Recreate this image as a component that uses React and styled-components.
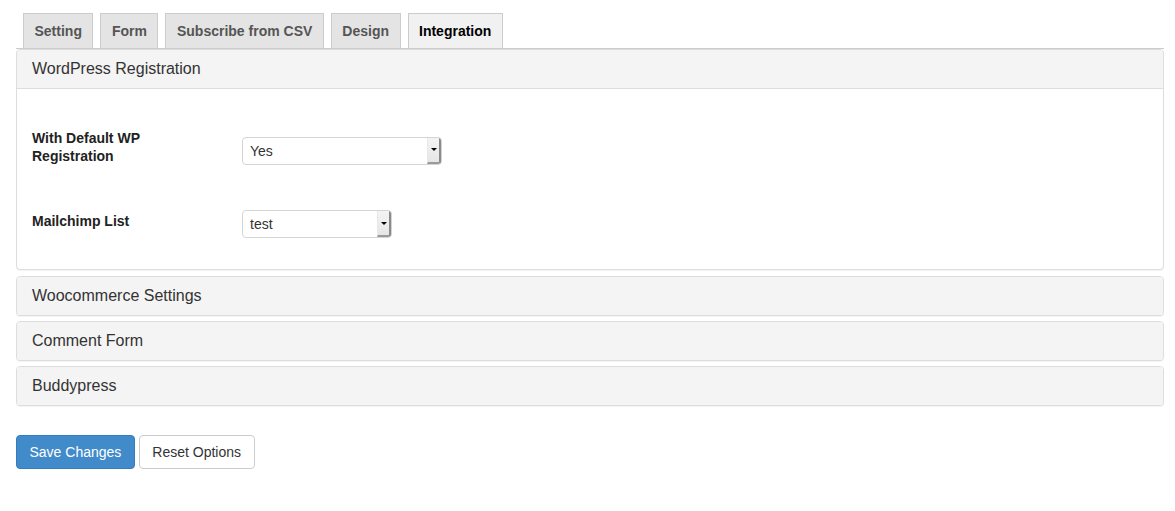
import React from "react";
import styled, { createGlobalStyle } from "styled-components";

const GlobalStyle = createGlobalStyle`
    body {
        margin: 0;
        background: #fff;
        font-family: "Liberation Sans", Arial, sans-serif;
        color: #333;
    }
`;

const Page = styled.div`
    width: 1148px;
    padding: 13px 0 0 16px;
`;

const TabBar = styled.div`
    display: flex;
    border-bottom: 1px solid #ccc;
`;

const Tab = styled.div`
    margin-left: 7px;
    padding: 5px 10.5px;
    border: 1px solid #ccc;
    border-bottom: none;
    background: ${p => (p.active ? "#f1f1f1" : "#e4e4e4")};
    color: ${p => (p.active ? "#000" : "#555")};
    font-size: 14px;
    font-weight: bold;
    line-height: 24px;
`;

const Panel = styled.div`
    border: 1px solid #ddd;
    border-radius: 4px;
    background: #fff;
    box-shadow: 0 1px 1px rgba(0, 0, 0, 0.05);
    margin-top: ${p => (p.first ? "0" : "5px")};
    overflow: hidden;
`;

const PanelHeading = styled.div`
    background: #f4f4f4;
    padding: 10px 15px;
    font-size: 16px;
    line-height: 18px;
    color: #333;
    border-bottom: ${p => (p.open ? "1px solid #ddd" : "none")};
`;

const PanelBody = styled.div`
    padding: 15px;
`;

const Row = styled.div`
    display: grid;
    grid-template-columns: 210px 1fr;
    align-items: center;
    padding: 19px 0;

    &:first-child {
        padding-top: 25px;
    }

    &:last-child {
        padding-bottom: 16px;
    }
`;

const Label = styled.div`
    font-size: 14px;
    font-weight: bold;
    line-height: 18px;
    color: #222;
    width: 150px;
`;

const Select = styled.div`
    display: flex;
    align-items: stretch;
    box-sizing: border-box;
    width: ${p => p.width}px;
    height: 28px;
    margin-top: 7px;
    border: 1px solid #d4d4d4;
    border-radius: 4px;
    background: #fff;
    font-size: 14px;
    color: #333;
    overflow: hidden;
`;

const SelectValue = styled.span`
    flex: 1;
    padding-left: 7px;
    line-height: 26px;
`;

const SelectArrow = styled.span`
    width: 14px;
    display: flex;
    align-items: center;
    justify-content: center;
    background: linear-gradient(#f4f4f4, #e6e6e6);
    border-left: 1px solid #e8e8e8;
    border-right: 2px solid #8a8a8a;
    border-bottom: 2px solid #9a9a9a;
    box-sizing: border-box;

    &::after {
        content: "";
        border-left: 3px solid transparent;
        border-right: 3px solid transparent;
        border-top: 3px solid #000;
    }
`;

const Actions = styled.div`
    display: flex;
    gap: 4px;
    margin-top: 29px;
`;

const Button = styled.button`
    font-family: "Liberation Sans", Arial, sans-serif;
    font-size: 14px;
    line-height: 20px;
    padding: 6px 12.5px;
    border-radius: 4px;
    border: 1px solid ${p => (p.primary ? "#357ebd" : "#ccc")};
    background: ${p => (p.primary ? "#428bca" : "#fff")};
    color: ${p => (p.primary ? "#fff" : "#333")};
    cursor: pointer;
`;

const tabs = ["Setting", "Form", "Subscribe from CSV", "Design", "Integration"];

const Dropdown = ({ value, width }) => (
    <Select width={width}>
        <SelectValue>{value}</SelectValue>
        <SelectArrow />
    </Select>
);

const App = () => {
    return (
        <Page>
            <GlobalStyle />
            <TabBar>
                {tabs.map(t => (
                    <Tab key={t} active={t === "Integration"}>
                        {t}
                    </Tab>
                ))}
            </TabBar>
            <Panel first>
                <PanelHeading open>WordPress Registration</PanelHeading>
                <PanelBody>
                    <Row>
                        <Label>With Default WP Registration</Label>
                        <Dropdown value="Yes" width={200} />
                    </Row>
                    <Row>
                        <Label>Mailchimp List</Label>
                        <Dropdown value="test" width={150} />
                    </Row>
                </PanelBody>
            </Panel>
            <Panel style={{ marginTop: 6 }}>
                <PanelHeading>Woocommerce Settings</PanelHeading>
            </Panel>
            <Panel>
                <PanelHeading>Comment Form</PanelHeading>
            </Panel>
            <Panel>
                <PanelHeading>Buddypress</PanelHeading>
            </Panel>
            <Actions>
                <Button primary>Save Changes</Button>
                <Button>Reset Options</Button>
            </Actions>
        </Page>
    );
};

export default App;
